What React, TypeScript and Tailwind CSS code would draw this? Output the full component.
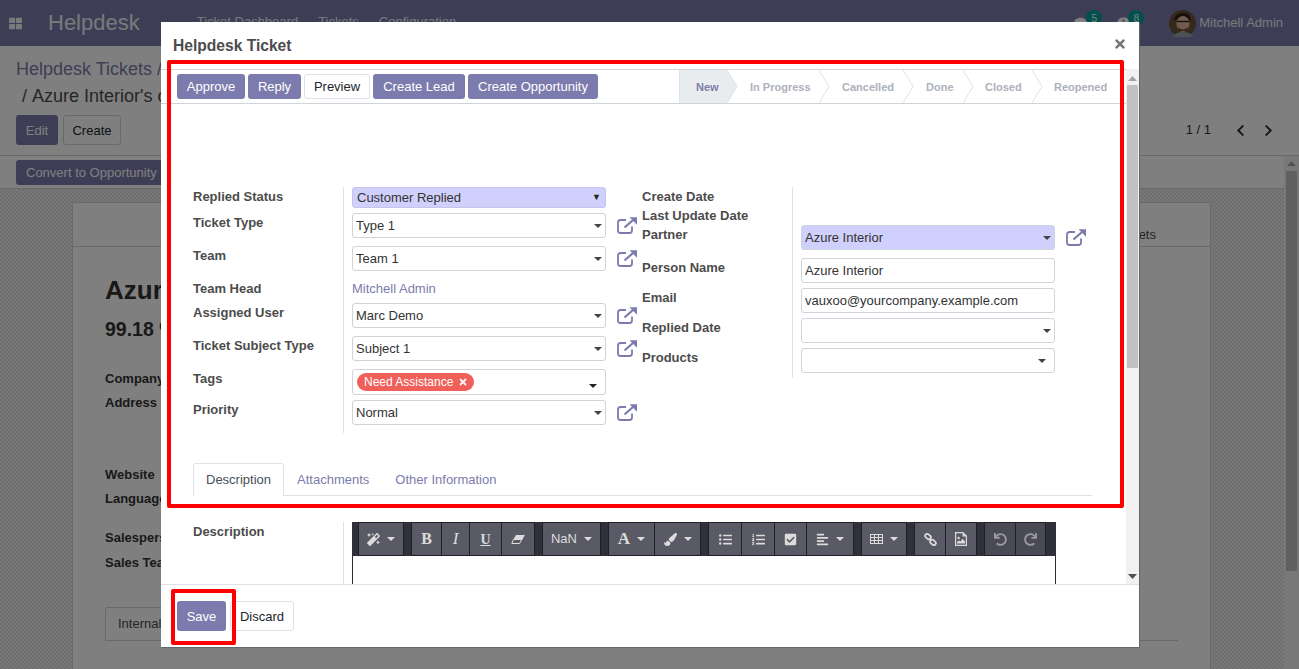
import React from "react";
import {
  FaMagic, FaPaintBrush, FaListUl, FaListOl, FaCheckSquare, FaAlignLeft,
  FaUndo, FaRedo, FaThLarge, FaTimes, FaChevronLeft, FaChevronRight, FaComment, FaClock,
} from "react-icons/fa";

const Caret = ({ className = "" }: { className?: string }) => (
  <svg width="8" height="4" viewBox="0 0 8 4" className={className}><path d="M0 0H8L4 4Z" fill="currentColor" /></svg>
);

const ExtLink = () => (
  <svg width="20" height="17" viewBox="0 0 20 17" fill="none" className="ml-[11px] mt-1 shrink-0">
    <path d="M9 3H3.5Q1 3 1 5.5V13.5Q1 16 3.5 16H12.5Q15 16 15 13.5V9.5" stroke="#7c7bad" strokeWidth="1.8" />
    <path d="M7.5 10.5L16 3" stroke="#7c7bad" strokeWidth="2.2" />
    <path d="M12.5 0.3H20V7.8Z" fill="#7c7bad" />
  </svg>
);

const EraserIcon = () => (
  <svg width="14" height="9" viewBox="0 0 14 9">
    <path d="M5 0H14L11 5H2Z" fill="currentColor" />
    <path d="M2.4 4.5L0.8 8.5H8.5L10.8 4.5" fill="none" stroke="currentColor" strokeWidth="1" />
  </svg>
);

const TableIcon = () => (
  <svg width="13" height="10" viewBox="0 0 13 10" fill="none" stroke="currentColor" strokeWidth="1">
    <rect x="0.5" y="0.5" width="12" height="9" />
    <path d="M0.5 3.5H12.5M0.5 6.5H12.5M4.5 0.5V9.5M8.5 0.5V9.5" />
  </svg>
);

const LinkIcon = () => (
  <svg width="13" height="13" viewBox="0 0 13 13" fill="none" stroke="currentColor" strokeWidth="1.7">
    <rect x="0.9" y="1.6" width="6.2" height="4" rx="2" transform="rotate(40 4 3.6)" />
    <rect x="5.9" y="7.4" width="6.2" height="4" rx="2" transform="rotate(40 9 9.4)" />
  </svg>
);

const ImageIcon = () => (
  <svg width="12" height="14" viewBox="0 0 12 14">
    <path d="M0.6 0.6H8L11.4 4V13.4H0.6Z" fill="none" stroke="currentColor" strokeWidth="1.2" />
    <path d="M7.6 0.8V4.4H11.2Z" fill="currentColor" />
    <circle cx="3.6" cy="6" r="1.2" fill="currentColor" />
    <path d="M2 11.6V10L4 8.6L5.4 9.6L7.6 6.8L10 9.4V11.6Z" fill="currentColor" />
  </svg>
);

const Label = ({ children, className = "" }: { children: React.ReactNode; className?: string }) => (
  <div className={`w-[150px] shrink-0 pt-px font-bold leading-[18px] text-[#4c4c4c] ${className}`}>{children}</div>
);

const Select = ({ text, bg = "bg-white", caret = "" }: { text?: string; bg?: string; caret?: string }) => (
  <div className={`w-[254px] h-[25px] flex items-center justify-between border border-[#ced4da] rounded-[3px] pl-[3px] pr-[3px] text-[#333] ${bg}`}>
    <span>{text}</span>
    <Caret className={`text-[#444] ${caret}`} />
  </div>
);

const Input = ({ text }: { text: string }) => (
  <div className="w-[254px] h-[25px] flex items-center border border-[#ced4da] rounded-[3px] pl-[3px] text-[#333] bg-white">{text}</div>
);

const Stage = ({ name, width, pad, active, last }: { name: string; width: string; pad: string; active?: boolean; last?: boolean }) => (
  <div className={`relative h-full flex items-center pt-px text-[11px] font-bold ${width} ${pad} ${active ? "bg-[#e9ecef] text-[#7c7bad] border-l border-[#dee2e6]" : "text-[#adb1ba]"}`}>
    <span>{name}</span>
    {!last && (
      <svg width="11" height="33" viewBox="0 0 11 33" className="absolute left-full top-0 z-10">
        <path d="M0 0L10 16.5L0 33Z" fill={active ? "#e9ecef" : "#ffffff"} />
        <path d="M0 0L10 16.5L0 33" fill="none" stroke="#dee2e6" />
      </svg>
    )}
  </div>
);

const ActBtn = ({ children, w, white }: { children: React.ReactNode; w: string; white?: boolean }) => (
  <div className={`h-[25px] flex items-center justify-center rounded-[3px] ${w} ${white ? "bg-white border border-[#dee2e6] text-[#212529]" : "bg-[#7c7bad] text-white"}`}>{children}</div>
);

const icon = "text-[13px]";
type TB = { w: string; c: React.ReactNode; dim?: boolean };
const toolbar: TB[][] = [
  [{ w: "w-[46px]", c: <><FaMagic className={icon} /><Caret /></> }],
  [
    { w: "w-[31px]", c: <span className="font-[Liberation_Serif,serif] font-bold text-[16px]">B</span> },
    { w: "w-[28px]", c: <span className="font-[Liberation_Serif,serif] italic text-[17px]">I</span> },
    { w: "w-[32px]", c: <span className="font-[Liberation_Serif,serif] font-bold text-[14px] underline">U</span> },
    { w: "w-[33px]", c: <EraserIcon /> },
  ],
  [{ w: "w-[59px]", c: <><span className="text-[13px]">NaN</span><Caret /></> }],
  [
    { w: "w-[47px]", c: <><span className="font-[Liberation_Serif,serif] font-bold text-[17px]">A</span><Caret /></> },
    { w: "w-[46px]", c: <><FaPaintBrush className={icon} /><Caret /></> },
  ],
  [
    { w: "w-[34px]", c: <FaListUl className={icon} /> },
    { w: "w-[33px]", c: <FaListOl className={icon} /> },
    { w: "w-[32px]", c: <FaCheckSquare className={icon} /> },
    { w: "w-[47px]", c: <><FaAlignLeft className={icon} /><Caret /></> },
  ],
  [{ w: "w-[46px]", c: <><TableIcon /><Caret /></> }],
  [
    { w: "w-[32px]", c: <LinkIcon /> },
    { w: "w-[31px]", c: <ImageIcon /> },
  ],
  [
    { w: "w-[32px]", c: <FaUndo className={icon} />, dim: true },
    { w: "w-[30px]", c: <FaRedo className={icon} />, dim: true },
  ],
];

const Background = () => (
  <div className="h-[669px] flex flex-col bg-white">
    <div className="h-[46px] shrink-0 bg-[#7c7bad] flex items-center text-white">
      <FaThLarge className="ml-[9px] text-[13px] opacity-90" />
      <div className="ml-[26px] text-[22px] opacity-90 leading-none">Helpdesk</div>
      <div className="ml-[57px] flex gap-[20px] -mt-[2px] opacity-90">
        <span>Ticket Dashboard</span>
        <span>Tickets</span>
        <span>Configuration</span>
      </div>
      <div className="ml-auto flex items-center mr-4">
        <FaComment className="text-[13px]" />
        <span className="w-4 h-4 rounded-full bg-[#00a09d] text-[10px] flex items-center justify-center -mt-[10px] -ml-px">5</span>
        <FaClock className="text-[13px] ml-[15px]" />
        <span className="w-4 h-4 rounded-full bg-[#00a09d] text-[10px] flex items-center justify-center -mt-[10px] -ml-[2px]">8</span>
        <svg width="27" height="27" viewBox="0 0 27 27" className="ml-[25px]">
          <circle cx="13.5" cy="13.5" r="13.5" fill="#6b5138" />
          <path d="M5 11Q6 3 14 3Q22 3 22 12L20 9H8Z" fill="#2a1d14" />
          <ellipse cx="14" cy="14" rx="6.5" ry="8" fill="#e0b79c" />
          <path d="M8 11.5H20" stroke="#2a1d14" strokeWidth="1.3" />
          <path d="M9 17Q14 22 19 17L18 21H10Z" fill="#6b4a33" />
          <path d="M4 27Q6 22 14 22Q22 22 24 27Z" fill="#9aa4a8" />
        </svg>
        <span className="ml-[3px] opacity-90">Mitchell Admin</span>
      </div>
    </div>
    <div className="h-[110px] shrink-0 border-b border-[#ced4da] pl-4 pr-[24px] pt-[11px] relative">
      <div className="text-[18px] leading-[24px] text-[#7c7bad]">Helpdesk Tickets /</div>
      <div className="text-[18px] leading-[24px] mt-[3px] pl-[6px] text-[#4c4c4c]"><span className="mr-[1px]">/</span> Azure Interior's opportunity</div>
      <div className="flex items-center mt-[7px]">
        <div className="w-[42px] h-[30px] pt-px rounded-[3px] bg-[#7c7bad] text-white flex items-center justify-center">Edit</div>
        <div className="ml-[5px] w-[58px] h-[30px] pt-px rounded-[3px] border border-[#ced4da] text-[#212529] flex items-center justify-center">Create</div>
        <span className="ml-auto text-[#333]">1 / 1</span>
        <FaChevronLeft className="ml-[23px] text-[13px] text-[#333]" />
        <FaChevronRight className="ml-[15px] text-[13px] text-[#333]" />
      </div>
    </div>
    <div className="flex-1 flex min-h-0">
      <div className="flex-1 min-w-0 flex flex-col">
        <div className="h-[33px] shrink-0 border-b border-[#ced4da] pl-4 pt-1">
          <div className="w-[151px] h-[25px] rounded-[3px] bg-[#7c7bad] text-white flex items-center pl-[10px]">Convert to Opportunity</div>
        </div>
        <div className="flex-1 min-h-0 pl-[72px] pr-[73px] pt-[13px] overflow-hidden bg-[repeating-conic-gradient(#dcdcdc_0_25%,#f0f0f0_0_50%)] bg-[length:4px_4px]">
          <div className="h-[600px] bg-white border border-[#ced4da] text-[#333]">
            <div className="h-[44px] border-b border-[#ced4da] flex items-end justify-end pr-[54px] pb-[2px] text-[#4c4c4c]">Tickets</div>
            <div className="pl-[32px] pt-[26px]">
              <div className="text-[26px] font-bold leading-[34px]">Azure Interior</div>
              <div className="text-[19.5px] font-bold mt-[10px] leading-[24px]">99.18 %</div>
              <div className="font-bold mt-[26px] leading-[24px]">Company</div>
              <div className="font-bold leading-[24px]">Address</div>
              <div className="font-bold mt-[48px] leading-[24px]">Website</div>
              <div className="font-bold leading-[24px]">Language</div>
              <div className="font-bold mt-[14px] leading-[25px]">Salesperson</div>
              <div className="font-bold leading-[25px]">Sales Team</div>
              <div className="mt-[32px] flex border-b border-[#ced4da] mr-[32px] h-[34px]">
                <div className="border border-b-0 border-[#ced4da] rounded-t-[3px] pl-[12px] pr-[13px] flex items-center text-[#4c4c4c]">Internal Notes</div>
              </div>
            </div>
          </div>
        </div>
      </div>
      <div className="w-[15px] shrink-0 bg-[#f1f1f1] flex flex-col items-center pt-[5px]">
        <svg width="9" height="5" viewBox="0 0 9 5" className="text-[#a3a3a3]"><path d="M0 5H9L4.5 0Z" fill="currentColor" /></svg>
        <div className="mt-[5px] w-[11px] h-[400px] bg-[#c1c1c1]" />
      </div>
    </div>
  </div>
);

const Modal = () => (
  <div className="absolute left-[161px] top-[22px] w-[979px] h-[626px] bg-white flex flex-col border-r border-b border-[#666]">
    <div className="h-[47px] shrink-0 flex items-center justify-between pl-3 pr-[12px]">
      <div className="text-[15.6px] font-bold text-[#4c4c4c]">Helpdesk Ticket</div>
      <FaTimes className="text-[14px] text-[#777] -mt-1" />
    </div>
    <div className="h-[515px] flex overflow-hidden shrink-0">
      <div className="w-[965px] shrink-0">
        <div className="h-[35px] border-y border-[#ced4da] flex items-center justify-between">
          <div className="flex gap-[3px] pl-4">
            <ActBtn w="w-[68px]">Approve</ActBtn>
            <ActBtn w="w-[53px]">Reply</ActBtn>
            <ActBtn w="w-[66px]" white>Preview</ActBtn>
            <ActBtn w="w-[92px]">Create Lead</ActBtn>
            <ActBtn w="w-[130px]">Create Opportunity</ActBtn>
          </div>
          <div className="flex h-full pr-[2px]">
            <Stage name="New" width="w-[48px]" pad="pl-[16px]" active />
            <Stage name="In Progress" width="w-[92px]" pad="pl-[23px]" />
            <Stage name="Cancelled" width="w-[84px]" pad="pl-[23px]" />
            <Stage name="Done" width="w-[60px]" pad="pl-[23px]" />
            <Stage name="Closed" width="w-[69px]" pad="pl-[22px]" />
            <Stage name="Reopened" width="w-[92px]" pad="pl-[22px]" last />
          </div>
        </div>
        <div className="pl-[32px] pt-[83px]">
          <div className="flex items-start">
            <div className="w-[449px] shrink-0 flex">
              <div>
                <Label className="h-[26px]">Replied Status</Label>
                <Label className="h-[33px]">Ticket Type</Label>
                <Label className="h-[33px]">Team</Label>
                <Label className="h-[24px]">Team Head</Label>
                <Label className="h-[33px]">Assigned User</Label>
                <Label className="h-[33px]">Ticket Subject Type</Label>
                <Label className="h-[31px]">Tags</Label>
                <Label className="h-[33px]">Priority</Label>
              </div>
              <div className="border-l border-[#dee2e6] pl-2 h-[246px]">
                <div className="h-[26px]">
                  <div className="w-[254px] h-[21px] flex items-center justify-between border border-[#c4c5ec] rounded-[3px] pl-[4px] pr-[4px] bg-[#cfd0fb] text-[#333]">
                    <span>Customer Replied</span><span className="text-[9px] text-[#222]">▼</span>
                  </div>
                </div>
                <div className="h-[33px] flex items-start"><Select text="Type 1" /><ExtLink /></div>
                <div className="h-[33px] flex items-start"><Select text="Team 1" /><ExtLink /></div>
                <div className="h-[24px] pt-px leading-[18px] text-[#7c7bad]">Mitchell Admin</div>
                <div className="h-[33px] flex items-start"><Select text="Marc Demo" /><ExtLink /></div>
                <div className="h-[33px] flex items-start"><Select text="Subject 1" /><ExtLink /></div>
                <div className="h-[31px]">
                  <div className="w-[254px] h-[26px] flex justify-between border border-[#ced4da] rounded-[3px] pl-1 pr-[8px] pt-[3px] bg-white">
                    <span className="h-[18px] w-[117px] rounded-full bg-[#f0605a] text-white text-[12px] flex items-center pl-[7px] gap-[5px]">
                      Need Assistance<FaTimes className="text-[10px]" />
                    </span>
                    <Caret className="text-[#222] mt-[11px]" />
                  </div>
                </div>
                <div className="h-[33px] flex items-start"><Select text="Normal" /><ExtLink /></div>
              </div>
            </div>
            <div className="flex">
              <div>
                <Label className="h-[19px]">Create Date</Label>
                <Label className="h-[19px]">Last Update Date</Label>
                <Label className="h-[33px]">Partner</Label>
                <Label className="h-[30px]">Person Name</Label>
                <Label className="h-[30px]">Email</Label>
                <Label className="h-[30px]">Replied Date</Label>
                <Label className="h-[30px]">Products</Label>
              </div>
              <div className="border-l border-[#dee2e6] pl-2 h-[191px] pt-[38px]">
                <div className="h-[33px] flex items-start"><Select text="Azure Interior" bg="bg-[#cfd0fb]" /><ExtLink /></div>
                <div className="h-[30px]"><Input text="Azure Interior" /></div>
                <div className="h-[30px]"><Input text="vauxoo@yourcompany.example.com" /></div>
                <div className="h-[30px]"><Select /></div>
                <div className="h-[30px]"><Select caret="mr-[5px]" /></div>
              </div>
            </div>
          </div>
          <div className="mt-[30px] h-[33px] w-[899px] border-b border-[#dee2e6] flex">
            <div className="h-[33px] border border-b-0 border-[#dee2e6] rounded-t-[3px] px-3 flex items-center bg-white text-[#495057]">Description</div>
            <div className="h-[33px] px-[13px] flex items-center text-[#7c7bad]">Attachments</div>
            <div className="h-[33px] px-[13px] flex items-center text-[#7c7bad]">Other Information</div>
          </div>
          <div className="mt-[26px] flex">
            <Label>Description</Label>
            <div className="border-l border-[#dee2e6] pl-2 h-[70px]">
              <div className="w-[704px] h-[70px] border-x border-[#2b2b33]">
                <div className="h-[34px] bg-[#2f303a] flex gap-[7px] -mx-px pl-[6px]">
                  {toolbar.map((g, i) => (
                    <div key={i} className="flex">
                      {g.map((b, j) => (
                        <div key={j} className={`h-[34px] border-y border-r first:border-l border-[#1f2027] flex items-center justify-center gap-[7px] ${b.w} ${b.dim ? "bg-[#4a4a56] text-[#9a9a9f]" : "bg-[#5a5a66] text-[#dcdcdc]"}`}>
                          {b.c}
                        </div>
                      ))}
                    </div>
                  ))}
                </div>
              </div>
            </div>
          </div>
        </div>
      </div>
      <div className="w-[13px] shrink-0 flex flex-col items-center bg-[#f1f1f1] pt-[7px] pr-[1px]">
        <svg width="9" height="5" viewBox="0 0 9 5"><path d="M0 5H9L4.5 0Z" fill="#a3a3a3" /></svg>
        <div className="mt-[4px] w-[11px] h-[283px] bg-[#c1c1c1]" />
        <svg width="9" height="5" viewBox="0 0 9 5" className="mt-[206px]"><path d="M0 0H9L4.5 5Z" fill="#505050" /></svg>
      </div>
    </div>
    <div className="flex-1 border-t border-[#dee2e6] flex items-start pl-4 pt-4 gap-1">
      <div className="w-[49px] h-[30px] pt-px rounded-[3px] bg-[#7c7bad] text-white flex items-center justify-center">Save</div>
      <div className="w-[64px] h-[30px] pt-px rounded-[3px] border border-[#dee2e6] text-[#212529] flex items-center justify-center">Discard</div>
    </div>
  </div>
);

export default function App() {
  return (
    <div className="relative h-[669px] overflow-hidden font-[Liberation_Sans,Arial,sans-serif] text-[13px]">
      <Background />
      <div className="absolute inset-0 bg-black/50" />
      <Modal />
      <div className="absolute left-[167px] top-[60px] w-[957px] h-[448px] border-4 border-[#ff0000] rounded-[2px] pointer-events-none" />
      <div className="absolute left-[171px] top-[589px] w-[65px] h-[56px] border-4 border-[#ff0000] rounded-[2px] pointer-events-none" />
    </div>
  );
}
